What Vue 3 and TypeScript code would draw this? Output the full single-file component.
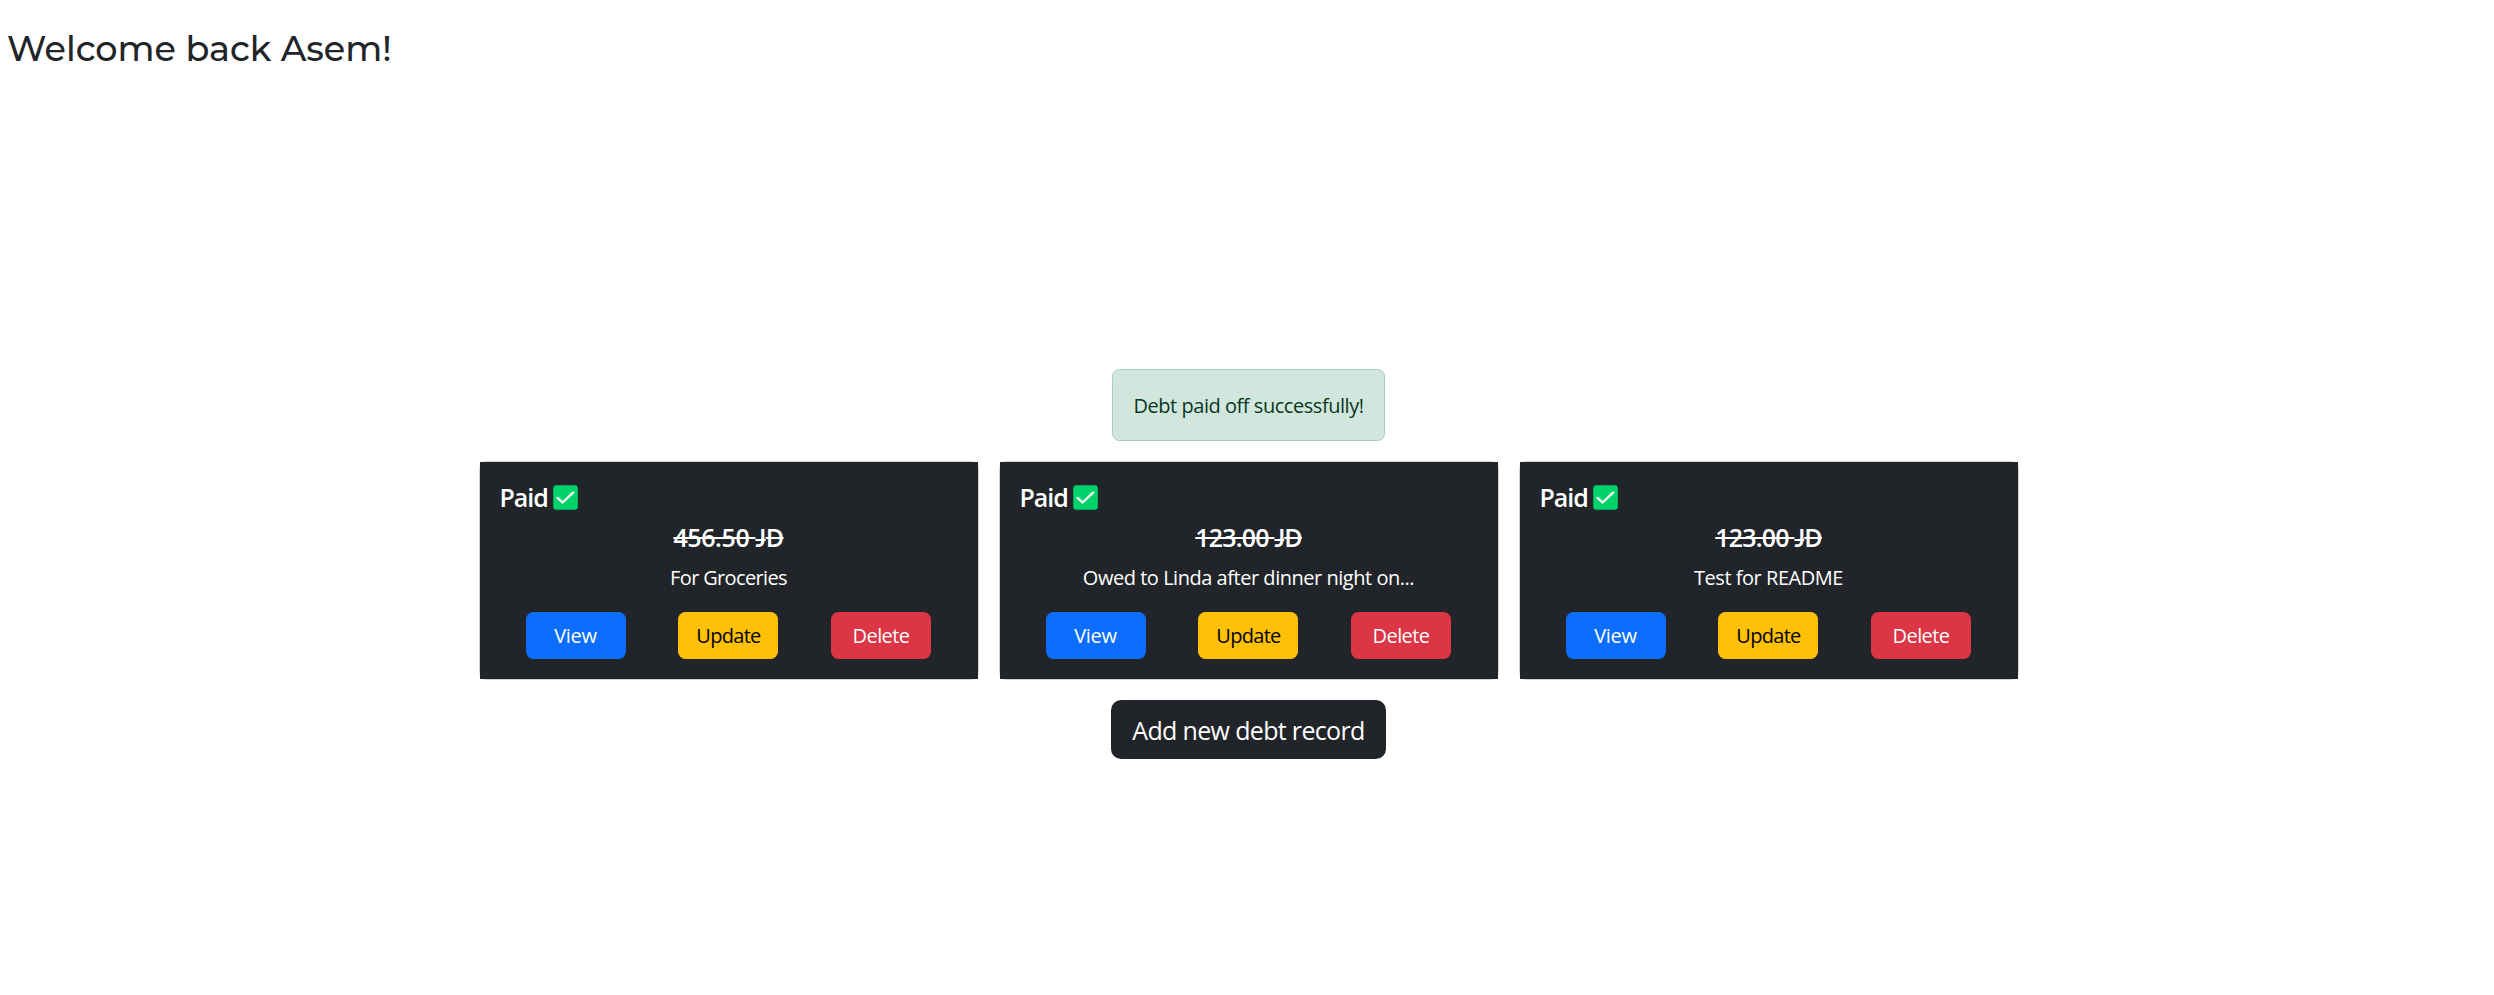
<script setup lang="ts">
interface Debt {
  id: number
  amount: string
  note: string
  amountClass: string
  noteClass: string
}

const debts: Debt[] = [
  { id: 1, amount: '456.50', note: 'For Groceries', amountClass: 'wide', noteClass: 'tight' },
  { id: 2, amount: '123.00', note: 'Owed to Linda after dinner night on...', amountClass: '', noteClass: '' },
  { id: 3, amount: '123.00', note: 'Test for README', amountClass: '', noteClass: '' },
]
</script>

<template>
  <div class="page">
    <h1 class="greeting">Welcome back Asem!</h1>
    <main class="content">
      <div class="alert" role="alert">Debt paid off successfully!</div>
      <section class="cards">
        <article v-for="debt in debts" :key="debt.id" class="card">
          <div class="card-body">
            <h5 class="status">
              <span>Paid</span>
              <svg class="check" viewBox="0 0 25 25" aria-hidden="true">
                <rect x="0.2" y="0.2" width="24.6" height="24.6" rx="3" fill="#00d26a" />
                <path d="M4.5 12.9 L9.7 17.5 L20 7.7" fill="none" stroke="#f4f4f4" stroke-width="2.4" stroke-linecap="round" stroke-linejoin="round" />
              </svg>
            </h5>
            <h5 class="amount" :class="debt.amountClass">{{ debt.amount }} <span class="initial">J</span>D</h5>
            <p class="note" :class="debt.noteClass">{{ debt.note }}</p>
            <div class="actions">
              <button class="btn view">View</button>
              <button class="btn update">Update</button>
              <button class="btn delete">Delete</button>
            </div>
          </div>
        </article>
      </section>
      <button class="add">Add new debt record</button>
    </main>
  </div>
</template>

<style>
body {
  background: #fff;
}
</style>

<style scoped>
.page {
  box-sizing: border-box;
  height: 995px;
  overflow: hidden;
  padding-top: 28px;
  color: #212529;
  font-family: "Segoe UI", "Open Sans", "Noto Sans", sans-serif;
  font-size: 20px;
  line-height: 30px;
}
.greeting {
  margin: 0 0 299px 7px;
  font-family: Montserrat, Inter, sans-serif;
  font-size: 35px;
  font-weight: 500;
  line-height: 42px;
}
.content {
  display: flex;
  flex-direction: column;
  align-items: center;
  gap: 20px;
  padding-left: 3px;
}
.alert {
  box-sizing: border-box;
  width: 273px;
  height: 72px;
  padding: 21px 0 19px;
  border: 1px solid #a3cfbb;
  border-radius: 7.5px;
  background: #d1e7dd;
  color: #0a3622;
  text-align: center;
  letter-spacing: -0.46px;
}
.cards {
  display: flex;
  gap: 20px;
}
.card {
  box-sizing: border-box;
  width: 500px;
  height: 219px;
  border: 1px solid #d3d3d3;
  border-radius: 7.5px;
}
.card-body {
  box-sizing: border-box;
  height: 217px;
  padding: 20px;
  background: #212529;
  color: #fff;
}
.status,
.amount {
  margin: 0 0 10px;
  font-size: 25px;
  font-weight: 600;
  line-height: 30px;
}
.status {
  display: flex;
  align-items: center;
  gap: 5.5px;
  height: 30px;
  letter-spacing: -1px;
}
.check {
  width: 25px;
  height: 25px;
}
.amount {
  text-align: center;
  text-decoration: line-through;
  text-decoration-thickness: 2px;
  letter-spacing: -0.8px;
}
.amount.wide {
  letter-spacing: -0.4px;
}
.initial {
  font-family: Lato, sans-serif;
  line-height: 1;
}
.note {
  margin: 0 0 19px;
  padding-top: 1px;
  text-align: center;
  letter-spacing: -0.47px;
}
.note.tight {
  letter-spacing: -0.65px;
}
.actions {
  display: flex;
  justify-content: space-between;
  padding: 0 27px 0 26px;
}
.btn {
  width: 100px;
  height: 47px;
  padding: 1px 0 0;
  border: 0;
  border-radius: 7.5px;
  color: #fff;
  font: inherit;
  text-align: center;
}
.view {
  background: #0d6efd;
  letter-spacing: -0.3px;
}
.update {
  padding-left: 1px;
  background: #ffc107;
  color: #000;
  letter-spacing: -0.7px;
}
.delete {
  padding-left: 1px;
  background: #dc3545;
  letter-spacing: -0.6px;
}
.add {
  width: 275px;
  height: 59px;
  padding: 0;
  border: 0;
  border-radius: 10px;
  background: #212529;
  color: #fff;
  font: inherit;
  font-size: 25px;
  letter-spacing: -0.66px;
}
</style>
